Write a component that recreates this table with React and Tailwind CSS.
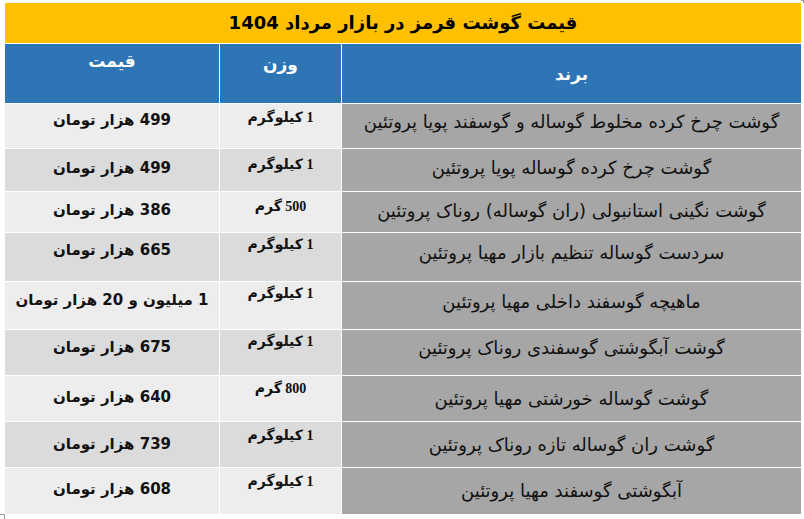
import React from "react";

const rows = [
  { brand: "گوشت چرخ کرده مخلوط گوساله و گوسفند پویا پروتئین", weight: "1 کیلوگرم", price: "499 هزار تومان", h: "h-[44px]", bg: "bg-[#ededed]", bp: "pt-[7px]", wp: "pt-[5px]", pp: "pt-[6px]" },
  { brand: "گوشت چرخ کرده گوساله پویا پروتئین", weight: "1 کیلوگرم", price: "499 هزار تومان", h: "h-[42px]", bg: "bg-[#dbdbdb]", bp: "pt-[8px]", wp: "pt-[7px]", pp: "pt-[9px]" },
  { brand: "گوشت نگینی استانبولی (ران گوساله) روناک پروتئین", weight: "500 گرم", price: "386 هزار تومان", h: "h-[40px]", bg: "bg-[#ededed]", bp: "pt-[8px]", wp: "pt-[6px]", pp: "pt-[8px]" },
  { brand: "سردست گوساله تنظیم بازار مهیا پروتئین", weight: "1 کیلوگرم", price: "665 هزار تومان", h: "h-[48px]", bg: "bg-[#dbdbdb]", bp: "pt-[9px]", wp: "pt-[3px]", pp: "pt-[7px]" },
  { brand: "ماهیچه گوسفند داخلی مهیا پروتئین", weight: "1 کیلوگرم", price: "1 میلیون و 20 هزار تومان", h: "h-[47px]", bg: "bg-[#ededed]", bp: "pt-[9px]", wp: "pt-[3px]", pp: "pt-[8px]" },
  { brand: "گوشت آبگوشتی گوسفندی روناک پروتئین", weight: "1 کیلوگرم", price: "675 هزار تومان", h: "h-[45px]", bg: "bg-[#dbdbdb]", bp: "pt-[7px]", wp: "pt-[3px]", pp: "pt-[7px]" },
  { brand: "گوشت گوساله خورشتی مهیا پروتئین", weight: "800 گرم", price: "640 هزار تومان", h: "h-[45px]", bg: "bg-[#ededed]", bp: "pt-[12px]", wp: "pt-[4px]", pp: "pt-[11px]" },
  { brand: "گوشت ران گوساله تازه روناک پروتئین", weight: "1 کیلوگرم", price: "739 هزار تومان", h: "h-[45px]", bg: "bg-[#dbdbdb]", bp: "pt-[12px]", wp: "pt-[5px]", pp: "pt-[12px]" },
  { brand: "آبگوشتی گوسفند مهیا پروتئین", weight: "1 کیلوگرم", price: "608 هزار تومان", h: "h-[46px]", bg: "bg-[#ededed]", bp: "pt-[12px]", wp: "pt-[5px]", pp: "pt-[11px]" },
];

const fa = "font-['DejaVu_Sans',sans-serif]";

export default function App() {
  return (
    <div className="relative w-[804px] h-[519px] bg-white overflow-hidden">
      <div className="absolute right-0 top-0 w-[3px] h-[3px] border-t border-r border-[#9a9a9a]" />
      <div className="absolute left-0 bottom-0 w-[5px] h-[5px] border-t border-r border-[#9a9a9a]" />
      <div dir="rtl" className={`ml-[5px] pt-[3px] w-[796px] flex flex-col gap-px ${fa}`}>
        <div className="h-[40px] bg-[#ffc000] flex items-center justify-center text-[18px] font-bold text-black leading-none">
          قیمت گوشت قرمز در بازار مرداد 1404
        </div>
        <div className="grid grid-cols-[459px_121px_214px] gap-x-px h-[59px] text-white font-bold text-[17px] leading-[20px]">
          <div className="bg-[#2e75b6] flex items-center justify-center">برند</div>
          <div className="bg-[#2e75b6] flex justify-center pt-[10px]">وزن</div>
          <div className="bg-[#2e75b6] flex justify-center pt-[7px]">قیمت</div>
        </div>
        {rows.map((r, i) => (
          <div key={i} className={`grid grid-cols-[459px_121px_214px] gap-x-px ${r.h}`}>
            <div className={`bg-[#a6a6a6] flex justify-center text-[18px] leading-[22px] text-[#111] ${r.bp}`}>
              {r.brand}
            </div>
            <div className={`${r.bg} flex justify-center text-[14px] leading-[18px] font-bold text-[#111] font-['Liberation_Serif','DejaVu_Sans',serif] ${r.wp}`}>
              {r.weight}
            </div>
            <div className={`${r.bg} flex justify-center text-[15px] leading-[20px] font-bold text-[#111] ${r.pp}`}>
              {r.price}
            </div>
          </div>
        ))}
      </div>
    </div>
  );
}
